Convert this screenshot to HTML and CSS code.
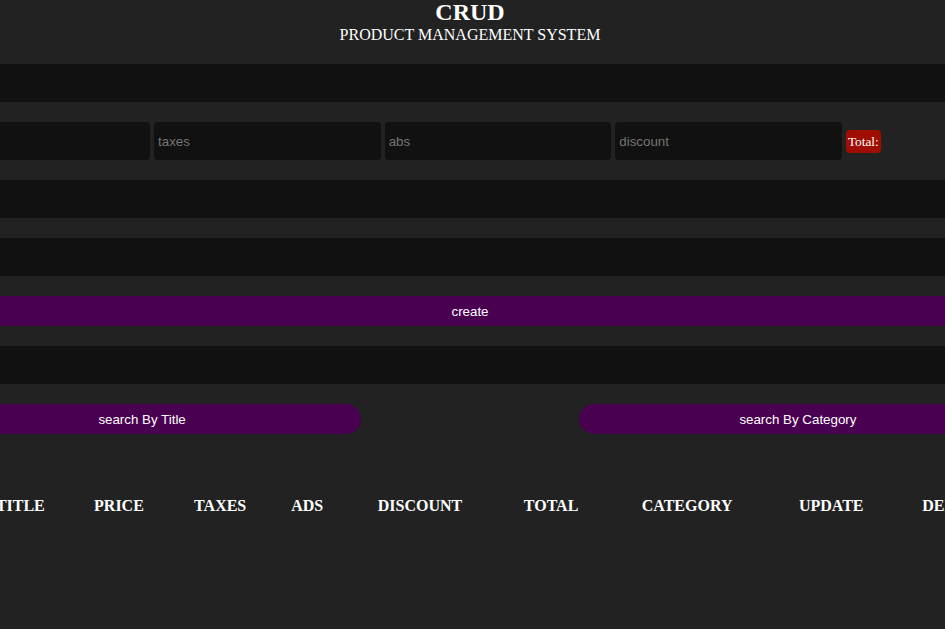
FILE: index.html
```html
<!DOCTYPE html>
<html>
<head>
<meta charset="utf-8">
<title>CRUD</title>
<link rel="stylesheet" href="styles.css">
</head>
<body>
<div class="page">
  <div class="crud">
    <div class="head">
      <h2>crud</h2>
      <p>product management system</p>
    </div>
    <div class="inputs">
      <input type="text" class="field" placeholder="title">
      <div class="price"><input type="number" class="field small" placeholder="price"> <input type="number" class="field small" placeholder="taxes"> <input type="number" class="field small" placeholder="abs"> <input type="number" class="field small" placeholder="discount"> <small class="total">Total:</small></div>
      <input type="number" class="field" placeholder="count">
      <input type="text" class="field" placeholder="category">
      <button class="btn create">create</button>
    </div>
    <div class="outputs">
      <div class="searchblock">
        <input type="text" class="field" placeholder="search">
        <div class="btnsearch">
          <button class="btn pill">search By Title</button>
          <button class="btn pill">search By Category</button>
        </div>
      </div>
      <table class="table">
        <tr>
          <th>id</th>
          <th>title</th>
          <th>price</th>
          <th>taxes</th>
          <th>ads</th>
          <th>discount</th>
          <th>total</th>
          <th>category</th>
          <th>update</th>
          <th>delete</th>
        </tr>
      </table>
    </div>
  </div>
</div>
</body>
</html>
```
FILE: styles.css
```css
html, body {
  margin: 0;
  padding: 0;
  background: #222222;
  color: #ffffff;
  font-family: "Liberation Serif", "Times New Roman", serif;
  overflow: hidden;
}
.page {
  width: 940px;
  display: flex;
  justify-content: center;
}
.crud {
  width: 1093px;
  flex: none;
}
.head {
  text-align: center;
  text-transform: uppercase;
}
.head h2 {
  margin: 0;
  font-size: 24px;
  line-height: 24px;
}
.head p {
  margin: 0;
  padding-top: 1px;
  font-size: 16px;
  line-height: 20px;
}
.inputs {
  margin-top: 19px;
  display: flex;
  flex-direction: column;
  gap: 20px;
}
.field {
  display: block;
  width: 100%;
  height: 30px;
  box-sizing: content-box;
  padding: 4px;
  margin: 0;
  border: none;
  outline: none;
  background: #111111;
  border-radius: 4px;
  color: #ffffff;
  font-family: "Liberation Sans", Arial, sans-serif;
  font-size: 13.333px;
}
.field::placeholder {
  color: #757575;
}
.price {
  font-size: 16px;
  white-space: nowrap;
  height: 38px;
  display: flex;
  align-items: center;
  gap: 4px;
}
.field.small {
  width: 20%;
  flex: none;
}
.total {
  background: #a00d02;
  color: #ffffff;
  font-size: 13.333px;
  padding: 3px 2px;
  border-radius: 4px;
  line-height: 17px;
}
.btn {
  display: block;
  height: 30px;
  border: none;
  background: #4a0051;
  color: #ffffff;
  font-family: "Liberation Sans", Arial, sans-serif;
  font-size: 13.333px;
  padding: 0;
  cursor: pointer;
}
.create {
  width: 100%;
}
.searchblock {
  margin-top: 20px;
  display: flex;
  flex-direction: column;
  gap: 20px;
}
.btnsearch {
  display: flex;
  justify-content: space-between;
}
.pill {
  width: 40%;
  border-radius: 15px;
}
.table {
  width: 100%;
  margin-top: 58px;
  text-align: center;
  border-collapse: separate;
  border-spacing: 0;
}
.table th {
  text-transform: uppercase;
  font-size: 16px;
  padding: 5px 6px;
}
```
